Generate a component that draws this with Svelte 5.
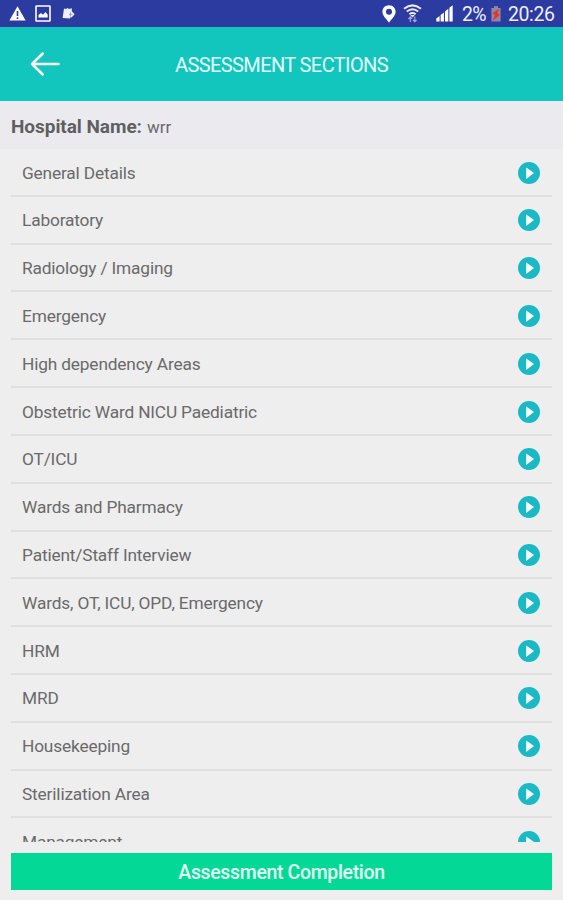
<script>
  const hospitalName = 'wrr';

  const sections = [
    'General Details',
    'Laboratory',
    'Radiology / Imaging',
    'Emergency',
    'High dependency Areas',
    'Obstetric Ward NICU Paediatric',
    'OT/ICU',
    'Wards and Pharmacy',
    'Patient/Staff Interview',
    'Wards, OT, ICU, OPD, Emergency',
    'HRM',
    'MRD',
    'Housekeeping',
    'Sterilization Area',
    'Management'
  ];
</script>

<div class="screen">
  <div class="status-bar">
    <div class="status-left">
      <svg width="17" height="15" viewBox="0 0 17 15">
        <path d="M8.5 0.3 L16.6 14.6 H0.4 Z" fill="#fff" />
        <path d="M8.5 5 V10 M8.5 11.3 V13" stroke="#2c3ba0" stroke-width="1.6" />
      </svg>
      <svg class="picture" width="16" height="17" viewBox="0 0 16 17">
        <rect x="1" y="1" width="14" height="15" rx="0.6" fill="none" stroke="#fff" stroke-width="1.6" />
        <path d="M3.5 12.6 V10 L6 8 L8 9.7 L10.5 7 L12.7 9.8 V12.6 Z" fill="#fff" />
      </svg>
      <svg class="card" width="13" height="13" viewBox="0 0 13 13">
        <path d="M2 1.5 L4 2.1 L5.5 1 L7 1.9 L9.8 1.2 L9.8 4.2 L12.7 7.3 L9.5 10.5 L8.6 9.8 L8.2 11.6 L0.6 11 Z" fill="#eef0fe" />
        <path d="M8.4 5.3 V9.3 M7 7.4 H10.5" stroke="#8790cf" stroke-width="0.8" />
      </svg>
    </div>
    <div class="status-right">
      <svg width="14" height="18" viewBox="0 0 14 18">
        <path fill-rule="evenodd" d="M7 0.3 C3.2 0.3 0.4 3.1 0.4 6.7 C0.4 11 4.6 13.8 7 17.7 C9.4 13.8 13.6 11 13.6 6.7 C13.6 3.1 10.8 0.3 7 0.3 Z M7 3.7 A3 3 0 1 1 7 9.7 A3 3 0 1 1 7 3.7 Z" fill="#fff" />
      </svg>
      <svg class="wifi" width="19" height="19" viewBox="0 0 19 19">
        <g fill="none" stroke="#e9ebfb">
          <path d="M1 4.8 Q9.5 -2 18 4.8" stroke-width="2" />
          <path d="M3.8 7.6 Q9.5 3 15.2 7.6" stroke-width="1.9" />
          <path d="M6.4 10.2 Q9.5 7.8 12.6 10.2" stroke-width="1.8" />
        </g>
        <path d="M7.2 11 H11.8 L9.5 13.4 Z" fill="#e9ebfb" />
        <path d="M7.3 18 V13.2 M5.4 15 L7.3 12.9 L9 15 M11.8 12.5 V17.5 M10 15.8 L11.8 17.8 L13.6 15.8" fill="none" stroke="#a9b0e2" stroke-width="1.1" />
      </svg>
      <svg class="signal" width="17" height="17" viewBox="0 0 17 17">
        <path d="M0.3 16.5 V13.5 L3.6 11 V16.5 Z M4.6 16.5 V10 L7.9 7.4 V16.5 Z M9 16.5 V6.4 L12.3 3.8 V16.5 Z M13.4 16.5 V2.8 L16.7 0.2 V16.5 Z" fill="#fff" />
      </svg>
      <span class="percent">2%</span>
      <svg class="battery" width="10" height="16" viewBox="0 0 10 16">
        <path d="M3 0.3 H7 V2 H9.6 V15.6 H0.4 V2 H3 Z" fill="#8e86a8" />
        <path d="M7.5 3.4 L1.8 7.3 L4.3 9 L2.4 13.8 L8.4 9.1 L6.1 7.3 Z" fill="#e8361c" stroke="#e8361c" stroke-width="0.7" />
      </svg>
      <span class="clock">20:26</span>
    </div>
  </div>

  <header class="header">
    <button class="back-btn" aria-label="Back">
      <svg width="30" height="24" viewBox="0 0 30 24">
        <path d="M28.5 12 H2 M12.8 1.5 L2 12 L12.8 22.5" fill="none" stroke="#fff" stroke-width="2.5" stroke-linecap="round" stroke-linejoin="round" />
      </svg>
    </button>
    <h1>ASSESSMENT SECTIONS</h1>
  </header>

  <div class="hospital">
    <strong>Hospital Name:</strong>
    <span>{hospitalName}</span>
  </div>

  <ul class="section-list">
    {#each sections as section}
      <li class="section-row">
        <span>{section}</span>
        <svg width="22" height="22" viewBox="0 0 22 22">
          <circle cx="11" cy="11" r="11" fill="#1bb9c5" />
          <path d="M8.2 5.5 L16 11 L8.2 16.9 Z" fill="#fff" />
        </svg>
      </li>
    {/each}
  </ul>

  <button class="complete-btn">Assessment Completion</button>
</div>

<style>
  :global(body) {
    margin: 0;
    background: #eeeeee;
  }

  .screen {
    display: flex;
    flex-direction: column;
    height: 900px;
    box-sizing: border-box;
    padding-bottom: 10px;
    overflow: hidden;
    background: #eeeeee;
    font-family: Roboto, 'Liberation Sans', sans-serif;
    color: #6a6a6a;
  }

  .status-bar {
    display: flex;
    flex: none;
    justify-content: space-between;
    height: 27px;
    padding: 0 8px 0 9px;
    background: #2c3ba0;
    color: #eceefb;
    font-size: 19.5px;
  }

  .status-left,
  .status-right {
    display: flex;
    align-items: center;
  }

  .picture {
    margin-left: 9px;
  }

  .card {
    margin-left: 11px;
  }

  .wifi {
    margin-left: 7px;
  }

  .signal {
    margin-left: 14px;
  }

  .percent {
    margin-left: 9px;
    margin-top: 2px;
    width: 25px;
    letter-spacing: -0.6px;
  }

  .battery {
    margin-left: 4px;
  }

  .clock {
    margin-left: 7px;
    margin-top: 2px;
    width: 47px;
    letter-spacing: -0.4px;
  }

  .header {
    display: grid;
    flex: none;
    grid-template-columns: 90px 1fr 90px;
    align-items: center;
    height: 74px;
    background: #12c6bd;
  }

  .back-btn {
    display: flex;
    justify-content: center;
    padding: 0;
    border: none;
    background: none;
    cursor: pointer;
  }

  h1 {
    margin: 2px 0 0;
    color: #e6fffc;
    font-size: 20px;
    font-weight: 400;
    letter-spacing: -0.6px;
    text-align: center;
    white-space: nowrap;
  }

  .hospital {
    display: flex;
    flex: none;
    align-items: baseline;
    gap: 5px;
    box-sizing: border-box;
    height: 48px;
    padding: 14px 11px 0;
    background: #ebebef;
    font-size: 17px;
  }

  .hospital strong {
    font-size: 19px;
    font-weight: 700;
    letter-spacing: -0.05px;
    color: #5f5f62;
  }

  .section-list {
    flex: 1;
    min-height: 0;
    margin: 0 11px 11px;
    padding: 0;
    overflow: hidden;
    list-style: none;
  }

  .section-row {
    display: flex;
    align-items: center;
    justify-content: space-between;
    box-sizing: border-box;
    height: 47.82px;
    padding: 1.2px 12px 0 11px;
    border-bottom: 2px solid #dfe1e1;
    font-size: 17.3px;
    letter-spacing: -0.16px;
  }

  .complete-btn {
    flex: none;
    height: 37px;
    margin: 0 11px;
    padding: 2px 0 0;
    border: none;
    background: #04d896;
    color: #e2fff3;
    font-family: inherit;
    font-size: 19.5px;
    font-weight: 500;
    letter-spacing: -0.35px;
    cursor: pointer;
  }
</style>
